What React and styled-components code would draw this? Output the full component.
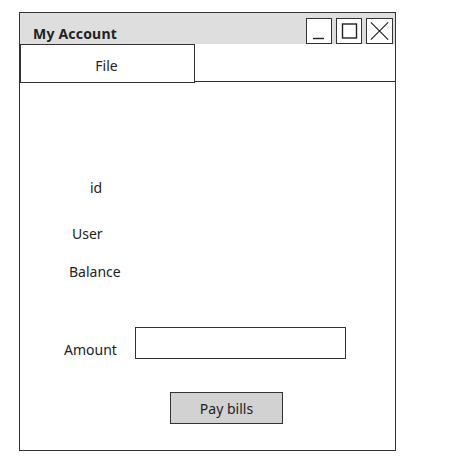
import React from 'react'
import styled, { createGlobalStyle } from 'styled-components'

const Global = createGlobalStyle`
  html, body {
    margin: 0;
    background: #fff;
    font-family: "Noto Sans", "DejaVu Sans", sans-serif;
    color: #222;
  }
`

const App = () => {
  return (
    <>
      <Global />
      <Page>
        <Window>
          <TitleBar>
            <Title>My Account</Title>
            <Controls>
              <CtrlButton>
                <svg width="24" height="24" viewBox="0 0 24 24">
                  <path d="M6 19.5 H17" stroke="#222" strokeWidth="1.4" fill="none" />
                </svg>
              </CtrlButton>
              <CtrlButton>
                <svg width="24" height="24" viewBox="0 0 24 24">
                  <rect x="5.5" y="5" width="14" height="14" stroke="#222" strokeWidth="1.4" fill="none" />
                </svg>
              </CtrlButton>
              <CtrlButton $wide>
                <svg width="26" height="24" viewBox="0 0 26 24">
                  <path d="M4 3 L22 21 M22 3 L4 21" stroke="#222" strokeWidth="1.2" fill="none" />
                </svg>
              </CtrlButton>
            </Controls>
          </TitleBar>
          <MenuBar>
            <MenuTab>File</MenuTab>
            <MenuRest />
          </MenuBar>
          <Content>
            <Label $left={70} $top={95}>id</Label>
            <Label $left={52} $top={26}>User</Label>
            <Label $left={49} $top={18}>Balance</Label>
            <FieldRow>
              <FieldLabel>Amount</FieldLabel>
              <Input />
            </FieldRow>
            <PayButton>Pay bills</PayButton>
          </Content>
        </Window>
      </Page>
    </>
  )
}

export default App

const Page = styled.div`
  padding: 12px 0 0 19px;
  width: 450px;
  height: 467px;
  box-sizing: border-box;
`

const Window = styled.div`
  width: 377px;
  height: 439px;
  box-sizing: border-box;
  border: 1.5px solid #333;
  display: flex;
  flex-direction: column;
  background: #fff;
`

const TitleBar = styled.div`
  height: 31px;
  background: #dedede;
  display: flex;
  align-items: flex-end;
  justify-content: space-between;
  padding-left: 13px;
  padding-right: 2px;
`

const Title = styled.div`
  font-weight: bold;
  font-size: 14px;
  line-height: 20px;
  padding-bottom: 0;
  letter-spacing: 0.2px;
`

const Controls = styled.div`
  display: flex;
  gap: 4px;
  align-items: flex-end;
`

const CtrlButton = styled.div`
  width: ${p => (p.$wide ? 27 : 26)}px;
  height: 26px;
  box-sizing: border-box;
  border: 1.3px solid #333;
  background: #fff;
  display: flex;
  align-items: center;
  justify-content: center;
`

const MenuBar = styled.div`
  display: flex;
  height: 39px;
`

const MenuTab = styled.div`
  width: 176px;
  box-sizing: border-box;
  border: 1.5px solid #333;
  border-left-width: 2px;
  margin-left: -1px;
  display: flex;
  align-items: center;
  justify-content: center;
  font-size: 14px;
  padding-top: 4px;
  padding-right: 2px;
`

const MenuRest = styled.div`
  flex: 1;
  border-bottom: 1.5px solid #333;
  margin-bottom: 1px;
`

const Content = styled.div`
  display: flex;
  flex-direction: column;
  align-items: flex-start;
`

const Label = styled.div`
  font-size: 14px;
  line-height: 20px;
  margin-left: ${p => p.$left}px;
  margin-top: ${p => p.$top}px;
`

const FieldRow = styled.div`
  display: flex;
  align-items: flex-start;
  margin-top: 45px;
  margin-left: 44px;
`

const FieldLabel = styled.div`
  width: 71px;
  font-size: 14px;
  line-height: 20px;
  margin-top: 13px;
`

const Input = styled.div`
  width: 211px;
  height: 32px;
  box-sizing: border-box;
  border: 1.3px solid #333;
  background: #fff;
`

const PayButton = styled.div`
  margin-top: 32px;
  margin-left: 150px;
  width: 113px;
  height: 32px;
  box-sizing: border-box;
  border: 1.3px solid #333;
  background: #d2d2d2;
  display: flex;
  align-items: center;
  justify-content: center;
  font-size: 14px;
`
